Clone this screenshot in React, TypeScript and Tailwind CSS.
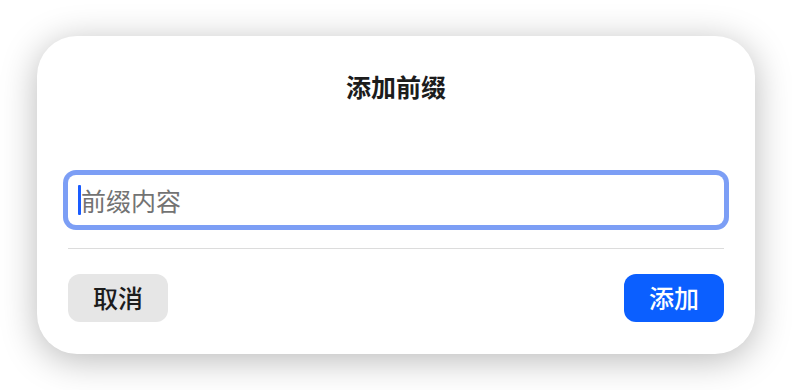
import React from "react";

export default function App() {
  const font = { fontFamily: '"Noto Sans CJK SC", "Noto Sans", sans-serif' };
  return (
    <div className="w-[792px] h-[390px] bg-white flex items-center justify-center" style={font}>
      <div className="w-[718px] h-[318px] rounded-[40px] bg-white shadow-[0_6px_36px_rgba(0,0,0,0.28)] flex flex-col px-[31px]">
        <div className="pt-[34px] h-[66px] text-center text-[25px] leading-[32px] font-bold text-[#1c1c1c]">
          添加前缀
        </div>
        <div className="mt-[73px] h-[50px] rounded-[8px] bg-white ring-[5px] ring-[#7c9ef5] flex items-center pl-[10px]">
          <span className="w-[3px] h-[30px] bg-[#1a5cff] rounded-[1px]" />
          <span className="text-[25px] leading-[30px] text-[#737373]">前缀内容</span>
        </div>
        <div className="mt-[23px] h-px bg-[#dcdcdc]" />
        <div className="mt-[25px] flex justify-between">
          <div className="w-[100px] h-[48px] rounded-[12px] bg-[#e6e6e6] flex items-center justify-center text-[25px] font-medium text-[#1c1c1c]">
            取消
          </div>
          <div className="w-[100px] h-[48px] rounded-[12px] bg-[#0b5fff] flex items-center justify-center text-[25px] font-medium text-white">
            添加
          </div>
        </div>
      </div>
    </div>
  );
}
